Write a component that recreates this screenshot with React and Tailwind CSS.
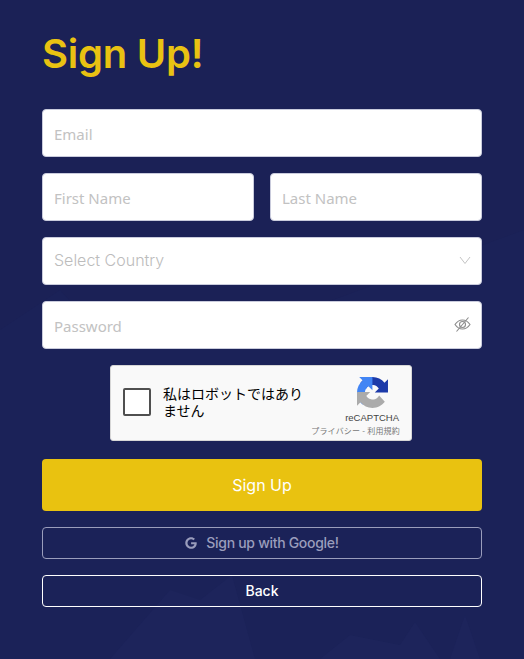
const inputClass =
  "h-12 w-full rounded border border-[#c9cbdc] bg-white px-[11px] pt-[1px] font-['Noto_Sans',sans-serif] text-[15px] text-gray-800 outline-none placeholder:text-[#c2c2c2]";

function RecaptchaLogo() {
  return (
    <svg width="31" height="31" viewBox="0 0 64 64">
      <path d="M64 31.955l-.033-1.37V4.687l-7.16 7.16C50.948 4.674 42.033.093 32.05.093c-10.4 0-19.622 4.96-25.458 12.64l11.736 11.86a15.55 15.55 0 0 1 4.754-5.334c2.05-1.6 4.952-2.906 8.968-2.906.485 0 .86.057 1.135.163 4.976.393 9.288 3.14 11.828 7.124l-8.307 8.307 26.295.008" fill="#1c3aa9" />
      <path d="M31.862 0l-1.37.033H4.594l7.16 7.16C4.58 13.05 0 21.967 0 31.95c0 10.4 4.96 19.622 12.64 25.458L24.5 45.67a15.55 15.55 0 0 1-5.334-4.754c-1.6-2.05-2.906-4.952-2.906-8.968 0-.485.057-.86.163-1.135.393-4.976 3.14-9.288 7.124-11.828l8.307 8.307L31.862 0" fill="#4285f4" />
      <path d="M.002 31.953l.033 1.37v25.898l7.16-7.16c5.86 7.173 14.775 11.754 24.76 11.754 10.4 0 19.622-4.96 25.458-12.64L45.677 38.316a15.55 15.55 0 0 1-4.754 5.334c-2.05 1.6-4.952 2.906-8.968 2.906-.485 0-.86-.057-1.135-.163-4.976-.393-9.288-3.14-11.828-7.124l8.307-8.307-26.295-.008" fill="#ababab" />
    </svg>
  );
}

export default function App() {
  return (
    <div className="relative h-[659px] w-[524px] overflow-hidden bg-[#1b2156]">
      {/* faint mountains behind the form */}
      <svg className="absolute inset-0" width="524" height="659" viewBox="0 0 524 659">
        <path d="M0 659V330L60 290L110 345L170 300L250 330L360 290L524 230V659Z" fill="#1b2258" />
        <path d="M110 659L170 590L200 600L232 575L255 659ZM320 659L350 635L400 645L415 622L440 659ZM450 659L465 615L480 659Z" fill="#1d245b" />
      </svg>

      <div className="relative flex flex-col px-[42px] pt-[28px]">
        <h1 className="font-['Inter',sans-serif] text-[40px] font-semibold leading-[51px] tracking-[-0.25px] text-[#e9c212]">
          Sign Up!
        </h1>

        <div className="mt-[30px] flex flex-col gap-4">
          <input className={inputClass} placeholder="Email" />
          <div className="flex gap-4">
            <input className={inputClass} placeholder="First Name" />
            <input className={inputClass} placeholder="Last Name" />
          </div>
          <div className="relative">
            <div className="flex h-12 items-center rounded border border-[#c9cbdc] bg-white px-[11px] pb-[2px] font-['Inter',sans-serif] text-base font-light text-[#bcbcbc]">
              Select Country
            </div>
            <svg className="absolute right-[11px] top-[19px]" width="12" height="9" viewBox="0 0 12 9" fill="none" stroke="#c4c4c4" strokeWidth="1">
              <path d="M1 1l5 6.500L11 1" />
            </svg>
          </div>
          <div className="relative">
            <input className={inputClass} placeholder="Password" />
            <svg className="absolute right-[11px] top-[15px]" width="17" height="17" viewBox="0 0 17 17" fill="none" stroke="#8c8c8c" strokeWidth="1.100">
              <path d="M1 8.500C3 5.500 5.500 4 8.500 4s5.500 1.500 7.500 4.500C14 11.500 11.500 13 8.500 13S3 11.500 1 8.500z" />
              <circle cx="8.500" cy="8.500" r="3" />
              <path d="M2.500 15.500L14.500 1.500" />
            </svg>
          </div>
        </div>

        <div className="ml-[68px] mt-4 flex h-[76px] w-[302px] self-start rounded-[3px] border border-[#d6d6d6] bg-[#f9f9f9] font-['Liberation_Sans','Noto_Sans_CJK_JP',sans-serif]">
          <div className="ml-3 mt-[22px] h-7 w-7 shrink-0 rounded-[2px] border-2 border-[#4f4f4f] bg-white" />
          <div className="ml-3 mt-[19px] w-[146px] font-['Noto_Sans_CJK_JP',sans-serif] text-sm leading-[17px] text-black">
            私はロボットではありません
          </div>
          <div className="flex flex-1 flex-col items-end pr-[11px] pt-[11px]">
            <div className="mr-[12px]">
              <RecaptchaLogo />
            </div>
            <div className="mr-[1px] mt-[4px] text-[9.500px] leading-3 text-[#444]">reCAPTCHA</div>
            <div className="mt-[2px] font-['Noto_Sans_CJK_JP',sans-serif] text-[8px] leading-[10px] tracking-[0.2px] text-[#777]">
              プライバシー - 利用規約
            </div>
          </div>
        </div>

        <button className="mt-[18px] h-[52px] w-full rounded bg-[#e9c210] font-['Inter',sans-serif] text-base text-white">
          Sign Up
        </button>
        <button className="mt-4 flex h-8 w-full items-center justify-center gap-[9px] rounded border border-[#9a9dbc] font-['Inter',sans-serif] text-sm font-medium tracking-[-0.3px] text-[#9a9dbc]">
          <svg width="12" height="12" viewBox="0 0 488 512" fill="currentColor">
            <path d="M488 261.800C488 403.300 391.100 504 248 504 110.800 504 0 393.200 0 256S110.800 8 248 8c66.800 0 123 24.500 166.300 64.900l-67.500 64.900C258.500 52.600 94.300 116.600 94.300 256c0 86.500 69.100 156.600 153.700 156.600 98.200 0 135-70.400 140.800-106.900H248v-85.300h236.100c2.300 12.700 3.900 24.900 3.900 41.400z" />
          </svg>
          Sign up with Google!
        </button>
        <button className="mt-4 h-8 w-full rounded border border-white font-['Inter',sans-serif] text-sm font-medium text-white">
          Back
        </button>
      </div>
    </div>
  );
}
